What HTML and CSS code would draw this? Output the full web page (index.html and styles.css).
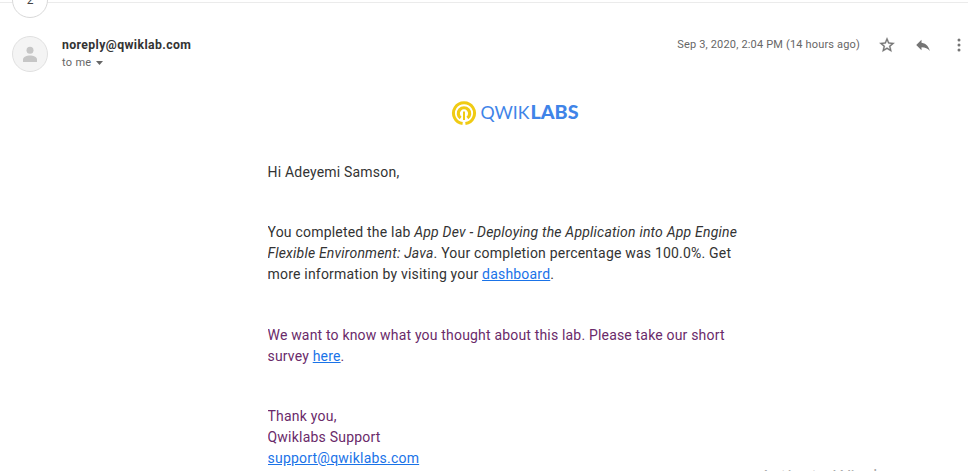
FILE: index.html
```html
<!DOCTYPE html>
<html lang="en">
<head>
<meta charset="utf-8">
<title>Qwiklabs</title>
<link rel="stylesheet" href="styles.css">
</head>
<body>
<div class="thread-rule"><span class="count">2</span></div>
<header class="head">
  <svg class="avatar" width="36" height="36" viewBox="0 0 36 36"><circle cx="18" cy="18" r="17.5" fill="#f4f4f4" stroke="#e0e0e0"/><circle cx="18" cy="14.3" r="3.500" fill="#c6c6c6"/><path d="M11 26v-2.500c0-2.600 4-4 7-4s7 1.400 7 4V26z" fill="#c6c6c6"/></svg>
  <div class="who">
    <div class="from">noreply@qwiklab.com</div>
    <div class="to"><span>to me</span><svg width="7" height="4" viewBox="0 0 7 4"><path d="M0 0h7L3.500 4z" fill="#666"/></svg></div>
  </div>
  <div class="date">Sep 3, 2020, 2:04 PM (14 hours ago)</div>
  <svg class="star" width="18" height="18" viewBox="0 0 24 24"><path fill="#757575" stroke="#757575" stroke-width=".4" d="M22 9.240l-7.190-.62L12 2 9.190 8.630 2 9.240l5.460 4.730L5.820 21 12 17.270 18.180 21l-1.630-7.030L22 9.240zM12 15.400l-3.760 2.270 1-4.280-3.320-2.880 4.380-.38L12 6.100l1.710 4.040 4.380.38-3.320 2.880 1 4.280L12 15.400z"/></svg>
  <svg class="reply" width="18" height="18" viewBox="0 0 24 24"><path fill="#757575" d="M10 9V5l-7 7 7 7v-4.100c5 0 8.500 1.600 11 5.100-1-5-4-10-11-11z"/></svg>
  <svg class="more" width="4" height="14" viewBox="0 0 4 14"><g fill="#757575"><circle cx="2" cy="2" r="1.500"/><circle cx="2" cy="7" r="1.500"/><circle cx="2" cy="12" r="1.500"/></g></svg>
</header>
<main class="mail">
  <svg class="logo" width="130" height="26" viewBox="0 0 130 26">
    <g fill="none" stroke="#f0cb14"><path d="M11.600 23.600A10.500 10.500 0 1 1 14.400 23.600" stroke-width="3"/><path d="M9.600 18A5.700 5.700 0 1 1 16.400 18" stroke-width="3.200"/></g>
    <path d="M12 11.500h2v8.500h-2z" fill="#f0cb14"/>
    <text x="29.500" y="19" textLength="49" lengthAdjust="spacingAndGlyphs" class="logo-light">QWIK</text>
    <text x="79.500" y="19" textLength="48" lengthAdjust="spacingAndGlyphs" class="logo-bold">LABS</text>
  </svg>
  <p>Hi Adeyemi Samson,</p>
  <p>You completed the lab <i>App Dev - Deploying the Application into App Engine<br>Flexible Environment: Java</i>. Your completion percentage was 100.0%. Get<br>more information by visiting your <a>dashboard</a>.</p>
  <p class="quoted survey">We want to know what you thought about this lab. Please take our short<br>survey <a>here</a>.</p>
  <p class="quoted sign">Thank you,<br>Qwiklabs Support<br><a>support@qwiklabs.com</a></p>
</main>
<div class="watermark">Activate Windows</div>
</body>
</html>
```
FILE: styles.css
```css
* { box-sizing: border-box; }
body { margin: 0; height: 471px; overflow: hidden; position: relative; background: #fff; font-family: Roboto, sans-serif; color: #333; }
.thread-rule { width: 968px; height: 3px; border-bottom: 1px solid #ebebeb; }
.count { position: absolute; left: 12px; top: -18px; width: 36px; height: 36px; border: 1px solid #d9d9d9; border-radius: 50%; background: #fff; text-align: center; font-size: 12px; line-height: 34px; color: #444; }
.head { display: flex; height: 36px; margin: 33px 0 0 12px; }
.who { width: 200px; margin-left: 14px; }
.from { font-size: 12.250px; font-weight: 700; line-height: 18px; letter-spacing: .39px; }
.to { display: flex; align-items: center; gap: 5px; font-size: 11px; line-height: 18px; color: #666; letter-spacing: .3px; }
.date { margin-left: auto; font-size: 11px; line-height: 17px; color: #666; letter-spacing: .17px; white-space: nowrap; }
.star { margin-left: 18px; }
.reply { margin-left: 18px; }
.more { margin: 2px 18px 0 25px; }
.mail { width: 500px; height: 381px; overflow: hidden; margin: 28px 0 0 267.500px; font-size: 14px; line-height: 21px; letter-spacing: .2px; }
.logo { display: block; margin-left: 183.500px; }
.logo-light, .logo-bold { font-family: Lato, sans-serif; font-size: 18px; fill: #3f84e8; letter-spacing: 0; }
.logo-bold { font-weight: 900; }
p { margin: 0 0 39px; white-space: nowrap; }
.logo + p { margin-top: 36px; }
p.survey { margin-top: 40px; letter-spacing: .18px; }
.quoted { color: #6a2a6a; }
.sign { letter-spacing: .22px; }
a { color: #1a73e8; text-decoration: underline; }
.watermark { position: absolute; left: 760px; top: 463px; height: 8px; overflow: hidden; font-family: "Open Sans", sans-serif; font-size: 18.500px; line-height: 26px; color: #aaa; white-space: nowrap; }
```
